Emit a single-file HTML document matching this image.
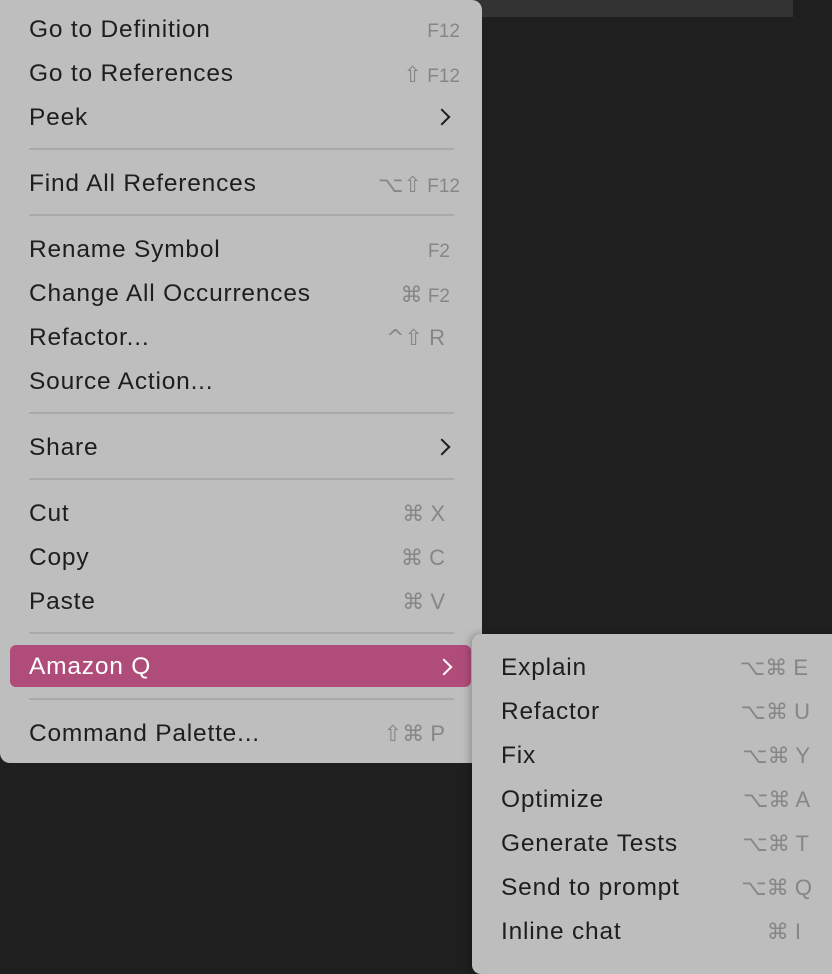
<!DOCTYPE html>
<html><head><style>
body{margin:0;width:832px;height:958px;background:#1f1f1f;overflow:hidden;position:relative;font-family:"Liberation Sans","DejaVu Sans",sans-serif}
.bar{position:absolute;left:470px;top:0;width:323px;height:17px;background:#333}
.menu{position:absolute;left:0;top:0;width:482px;height:763px;background:#bebebe;border-radius:0 10px 10px 10px}
.sub{position:absolute;left:472px;top:634px;width:370px;height:340px;background:#bdbdbd;border-radius:9px;box-shadow:-2px 0 8px rgba(0,0,0,.25)}
.r{position:absolute;height:44px;line-height:46px;font-size:24.5px;letter-spacing:0.8px;color:#1e1e1e;white-space:nowrap}
.k{position:absolute;height:44px;line-height:46px;font-size:22px;color:#868686;text-align:right;white-space:nowrap;font-family:"Liberation Sans","DejaVu Sans",sans-serif}
.k.s{font-size:19px}
.k b{font-weight:normal;font-family:"DejaVu Sans",sans-serif;font-size:22px}
.sep{position:absolute;left:29px;width:425px;height:2px;background:#aaa}
.hl{position:absolute;left:10px;top:645px;width:461px;height:42px;background:#b04c7a;border-radius:6px}
.ch{position:absolute;width:10px;height:10px;border-right:2.5px solid #1e1e1e;border-top:2.5px solid #1e1e1e;transform:rotate(45deg)}
</style></head><body>
<div class="bar"></div>
<div class="menu">
<div class="r" style="left:29px;top:7px">Go to Definition</div><div class="k s" style="right:22px;top:9px">F12</div>
<div class="r" style="left:29px;top:51px">Go to References</div><div class="k s" style="right:22px;top:53px"><b>⇧</b> F12</div>
<div class="r" style="left:29px;top:95px">Peek</div><div class="ch" style="left:436px;top:111px"></div>
<div class="sep" style="top:148px"></div>
<div class="r" style="left:29px;top:161px">Find All References</div><div class="k s" style="right:22px;top:163px"><b>⌥⇧</b> F12</div>
<div class="sep" style="top:214px"></div>
<div class="r" style="left:29px;top:227px">Rename Symbol</div><div class="k s" style="right:32px;top:229px">F2</div>
<div class="r" style="left:29px;top:271px">Change All Occurrences</div><div class="k s" style="right:32px;top:273px"><b>⌘</b> F2</div>
<div class="r" style="left:29px;top:315px">Refactor...</div><div class="k" style="right:37px;top:315px"><b>^⇧</b> R</div>
<div class="r" style="left:29px;top:359px">Source Action...</div>
<div class="sep" style="top:412px"></div>
<div class="r" style="left:29px;top:425px">Share</div><div class="ch" style="left:436px;top:441px"></div>
<div class="sep" style="top:478px"></div>
<div class="r" style="left:29px;top:491px">Cut</div><div class="k" style="right:37px;top:491px">⌘ X</div>
<div class="r" style="left:29px;top:535px">Copy</div><div class="k" style="right:37px;top:535px">⌘ C</div>
<div class="r" style="left:29px;top:579px">Paste</div><div class="k" style="right:37px;top:579px">⌘ V</div>
<div class="sep" style="top:632px"></div>
<div class="hl"></div>
<div class="r" style="left:29px;top:644px;color:#fff">Amazon Q</div><div class="ch" style="left:438px;top:661px;border-color:#fff"></div>
<div class="sep" style="top:698px"></div>
<div class="r" style="left:29px;top:711px">Command Palette...</div><div class="k" style="right:37px;top:711px"><b>⇧</b>⌘ P</div>
</div>
<div class="sub">
<div class="r" style="left:29px;top:11px">Explain</div><div class="k" style="right:34px;top:11px">⌥⌘ E</div>
<div class="r" style="left:29px;top:55px">Refactor</div><div class="k" style="right:32px;top:55px">⌥⌘ U</div>
<div class="r" style="left:29px;top:99px">Fix</div><div class="k" style="right:32px;top:99px">⌥⌘ Y</div>
<div class="r" style="left:29px;top:143px">Optimize</div><div class="k" style="right:32px;top:143px">⌥⌘ A</div>
<div class="r" style="left:29px;top:187px">Generate Tests</div><div class="k" style="right:33px;top:187px">⌥⌘ T</div>
<div class="r" style="left:29px;top:231px">Send to prompt</div><div class="k" style="right:30px;top:231px">⌥⌘ Q</div>
<div class="r" style="left:29px;top:275px">Inline chat</div><div class="k" style="right:41px;top:275px">⌘ I</div>
</div>
</body></html>
